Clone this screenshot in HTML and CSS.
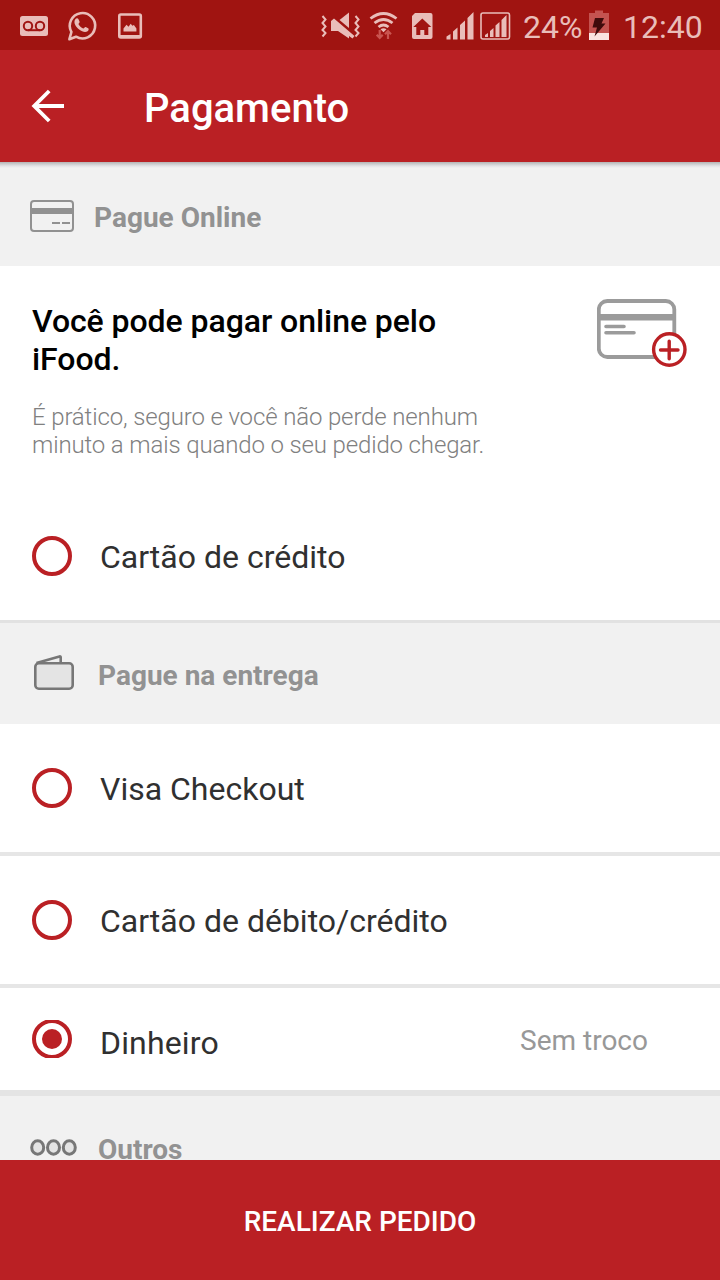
FILE: index.html
```html
<!DOCTYPE html>
<html lang="pt-BR">
<head>
<meta charset="utf-8">
<title>Pagamento</title>
<link rel="stylesheet" href="styles.css">
</head>
<body>
<div class="screen">
  <div class="status">
    <svg class="status-left" width="150" height="50" viewBox="0 0 150 50">
      <rect x="20" y="16" width="28" height="20" rx="2.5" fill="#e9bdb9"/>
      <g fill="none" stroke="#a01411" stroke-width="2"><circle cx="28" cy="26" r="4.2"/><circle cx="40" cy="26" r="4.2"/><path d="M28 30.2h12"/></g>
      <path d="M69.400 39.2l2-7.2a12.700 12.700 0 1 1 4.600 4.700z" fill="none" stroke="#e9bdb9" stroke-width="2.6" stroke-linejoin="round"/>
      <path d="M75.500 19c1-1.200 2.500-1 3 .3l1.100 2.500c.3.900-1.300 1.800-1.100 2.500 1 1.800 2.700 3.300 4.700 4.300.8.200 1.600-1.800 2.500-1.500l2.400 1.200c1 .5.700 2-.5 3-2.400 1.700-5.500.5-8.400-1.700-3.400-2.700-6.400-7.100-3.700-10.600z" fill="#e9bdb9"/>
      <rect x="119.300" y="14.500" width="21.500" height="23" rx="1.500" fill="none" stroke="#e9bdb9" stroke-width="2.600"/>
      <path d="M119 35h22v3h-22zM123.500 31.500v-3l3-3.800 2 2 2.200-2.900 1.700 1.900 1.500-.7 2.500 3.500v3z" fill="#e9bdb9"/>
    </svg>
    <svg width="194" height="50" viewBox="320 0 194 50">
      <path d="M322.500 16l3 3.500-3 3.500 3 3.500-3 3.500 3 3-3 3.500M355.500 16l3 3.500-3 3.500 3 3.500-3 3.500 3 3-3 3.500" fill="none" stroke="#e9bdb9" stroke-width="2"/>
      <path d="M349 12.500v15.500L339.500 20z" fill="#e9bdb9"/>
      <path d="M331 21l3-2.500L354.500 36l-2 2.500-3.500-2.500v2.500L338 31h-7z" fill="#e9bdb9"/>
      <g fill="none" stroke="#e9bdb9" stroke-width="2.800"><path d="M370.500 18.500q13-10 26 0M374.500 23q9-7 18 0M378.500 27q5-4 10 0"/></g>
      <path d="M380.500 29.300q3-2 6 0l-3 3z" fill="#e9bdb9"/>
      <g fill="none" stroke="#c95550" stroke-width="2.200"><path d="M379.700 30v8M376.700 34.800l3 3.200 3-3.200M388 39v-8M385 34.200l3-3.200 3 3.200"/></g>
      <path d="M415 13h15.500a2 2 0 0 1 2 2v22a2 2 0 0 1-2 2H414a2 2 0 0 1-2-2V16z" fill="#e9bdb9"/>
      <path d="M422.300 18.500l9 8.500h-3v8h-4v-5h-4v5h-4v-8h-3z" fill="#a01411"/>
      <path d="M446.500 39.500V36.500l4-2.500v5.500zM453 39.500V31.500l4.500-4v12zM460 39.500V25l5-4.500v19zM467.500 39.500V18l6-6v27.500z" fill="#e9bdb9"/>
      <rect x="481" y="13" width="28.500" height="26" rx="2" fill="none" stroke="#e9bdb9" stroke-width="1.600"/>
      <path d="M485 37v-2l3-2v4zM490 37v-6l3.500-3v9zM495.500 37V25.500l4-3.500v15zM501.500 37V20l5-5v22z" fill="#e9bdb9"/>
    </svg>
    <span class="percent">24%</span>
    <svg class="battery" width="20" height="50" viewBox="589 0 20 50">
      <path d="M589 13h6v-2.500h8V13h6v20h-20z" fill="#c45350"/>
      <path d="M589 33h20v7h-20z" fill="#fae3e0"/>
      <path d="M595 18h9l-2.500 5.500h4L594.500 36.500l2.500-9h-4.500z" fill="#3f0b0b"/>
    </svg>
    <span class="clock">12:40</span>
  </div>
  <header class="appbar">
    <svg class="back" width="34" height="34" viewBox="31 89 34 34"><path d="M64 106H35M49.200 91L34.200 106l15 15" fill="none" stroke="#fff" stroke-width="3.800"/></svg>
    <h1 class="title">Pagamento</h1>
  </header>
  <main class="content">
    <div class="section section-online">
      <svg width="44" height="32" viewBox="0 0 44 32"><rect x="1" y="1" width="42" height="30" rx="3" fill="none" stroke="#919191" stroke-width="2"/><path d="M1 8h42v6H1z" fill="#919191"/><path d="M22 23h8M32 23h8" stroke="#919191" stroke-width="2"/></svg>
      <h2 class="section-title">Pague Online</h2>
    </div>
    <div class="intro">
      <div>
        <p class="headline">Você pode pagar online pelo<br>iFood.</p>
        <p class="description">É prático, seguro e você não perde nenhum<br>minuto a mais quando o seu pedido chegar.</p>
      </div>
      <svg class="add-card" width="91" height="69" viewBox="597 299 91 69">
        <rect x="598.800" y="301" width="75.500" height="56" rx="8.500" fill="none" stroke="#9b9b9b" stroke-width="3.800"/>
        <path d="M599 314h75v6.500h-75z" fill="#9b9b9b"/>
        <path d="M606 326.500h18M606 332.700h28" stroke="#9b9b9b" stroke-width="3.600" stroke-linecap="round"/>
        <circle cx="669.300" cy="349.500" r="15.700" fill="#fff" stroke="#ba2024" stroke-width="3.400"/>
        <path d="M660.500 350h17.500M669.200 341.200v17.500" stroke="#ba2024" stroke-width="3.400" stroke-linecap="round"/>
      </svg>
    </div>
    <div class="option option-credit"><span class="radio"></span><span class="label">Cartão de crédito</span></div>
    <div class="section section-delivery">
      <svg width="40" height="36" viewBox="34 654 40 36"><path d="M36.500 663l23-6.600q1.200-.3 1.200 1v5.500" fill="#eee" stroke="#777" stroke-width="2.600" stroke-linejoin="round"/><rect x="35.300" y="663.300" width="37.400" height="25.400" rx="3.500" fill="#e4e4e4" stroke="#777" stroke-width="2.600"/></svg>
      <h2 class="section-title">Pague na entrega</h2>
    </div>
    <div class="option"><span class="radio"></span><span class="label">Visa Checkout</span></div>
    <div class="option"><span class="radio"></span><span class="label">Cartão de débito/crédito</span></div>
    <div class="option option-cash">
      <svg class="radio-on" width="40" height="38" viewBox="0 1 40 38"><circle cx="20" cy="20" r="18" fill="none" stroke="#ba2024" stroke-width="4"/><circle cx="20" cy="20" r="10" fill="#ba2024"/></svg>
      <span class="label">Dinheiro</span><span class="change">Sem troco</span>
    </div>
    <div class="section section-others">
      <svg width="48" height="18" viewBox="30 1139 48 18"><g fill="#e4e4e4" stroke="#777" stroke-width="3"><ellipse cx="37.700" cy="1147.500" rx="6" ry="6.700"/><ellipse cx="53.500" cy="1147.500" rx="6" ry="6.700"/><ellipse cx="69.300" cy="1147.500" rx="6" ry="6.700"/></g></svg>
      <h2 class="section-title">Outros</h2>
    </div>
  </main>
  <button class="submit">REALIZAR PEDIDO</button>
</div>
</body>
</html>
```
FILE: styles.css
```css
* { box-sizing: border-box; }
body { margin: 0; font-family: Roboto, "Liberation Sans", sans-serif; background: #fff; }
h1, h2, p { margin: 0; }
svg { display: block; flex: none; }
.screen { width: 720px; height: 1280px; display: flex; flex-direction: column; overflow: hidden; }
.status { height: 50px; flex: none; display: flex; background: #a01411; color: #e9bdb9; font-size: 32px; line-height: 54px; white-space: nowrap; }
.status-left { margin-right: 170px; }
.percent { width: 66px; margin-left: 9px; }
.clock { margin-left: 14px; }
.appbar { height: 112px; flex: none; display: flex; align-items: flex-start; padding-left: 31px; background: #ba2024; color: #fff; }
.back { margin-top: 39px; }
.title { margin: 35px 0 0 79px; font-size: 40px; line-height: 48px; font-weight: 500; }
.content { flex: 1; min-height: 0; overflow: hidden; }
.section { display: flex; align-items: flex-start; background: #f1f1f1; color: #929292; }
.section-title { font-size: 28px; line-height: 34px; font-weight: 700; }
.section-online { height: 104px; padding: 38px 0 0 30px; gap: 20px; background: linear-gradient(#b4b4b4, #e3e3e6 4px, #f1f1f1 6px); }
.section-online .section-title { margin-top: 1px; }
.section-delivery { height: 104px; padding: 34px 0 0 34px; gap: 24px; border-top: 3px solid #e2e2e2; }
.section-delivery svg { margin-top: -3px; }
.section-delivery .section-title { margin-top: 2px; }
.section-others { height: 70px; padding: 43px 0 0 30px; gap: 20px; border-top: 6px solid #e4e4e4; }
.section-others .section-title { margin-top: -6px; }
.intro { height: 224px; display: flex; justify-content: space-between; padding: 36px 32px 0; }
.headline { color: #000; font-size: 32px; line-height: 38px; font-weight: 500; letter-spacing: -0.06px; }
.description { margin-top: 25px; color: #808080; font-size: 24px; line-height: 28px; font-weight: 300; letter-spacing: -0.14px; }
.add-card { margin-top: -3px; }
.option { height: 132px; display: flex; align-items: center; padding: 0 72px 0 32px; border-bottom: 4px solid #e6e6e6; color: #303030; font-size: 32px; line-height: 38px; }
.option-credit { height: 130px; padding: 2px 72px 0 32px; border-bottom: 0; }
.option-cash { height: 102px; border-bottom: 0; }
.radio { flex: none; width: 40px; height: 40px; border: 4px solid #ba2024; border-radius: 50%; }
.label { margin-left: 28px; padding-top: 2px; }
.option-cash .label { padding-top: 8px; letter-spacing: 0.15px; }
.change { margin-left: auto; padding-top: 4px; color: #989898; font-size: 28px; line-height: 34px; }
.submit { flex: none; height: 120px; padding: 4px 0 0; border: 0; background: #ba2024; color: #fff; font: 500 28px/34px Roboto, "Liberation Sans", sans-serif; text-align: center; }
```
